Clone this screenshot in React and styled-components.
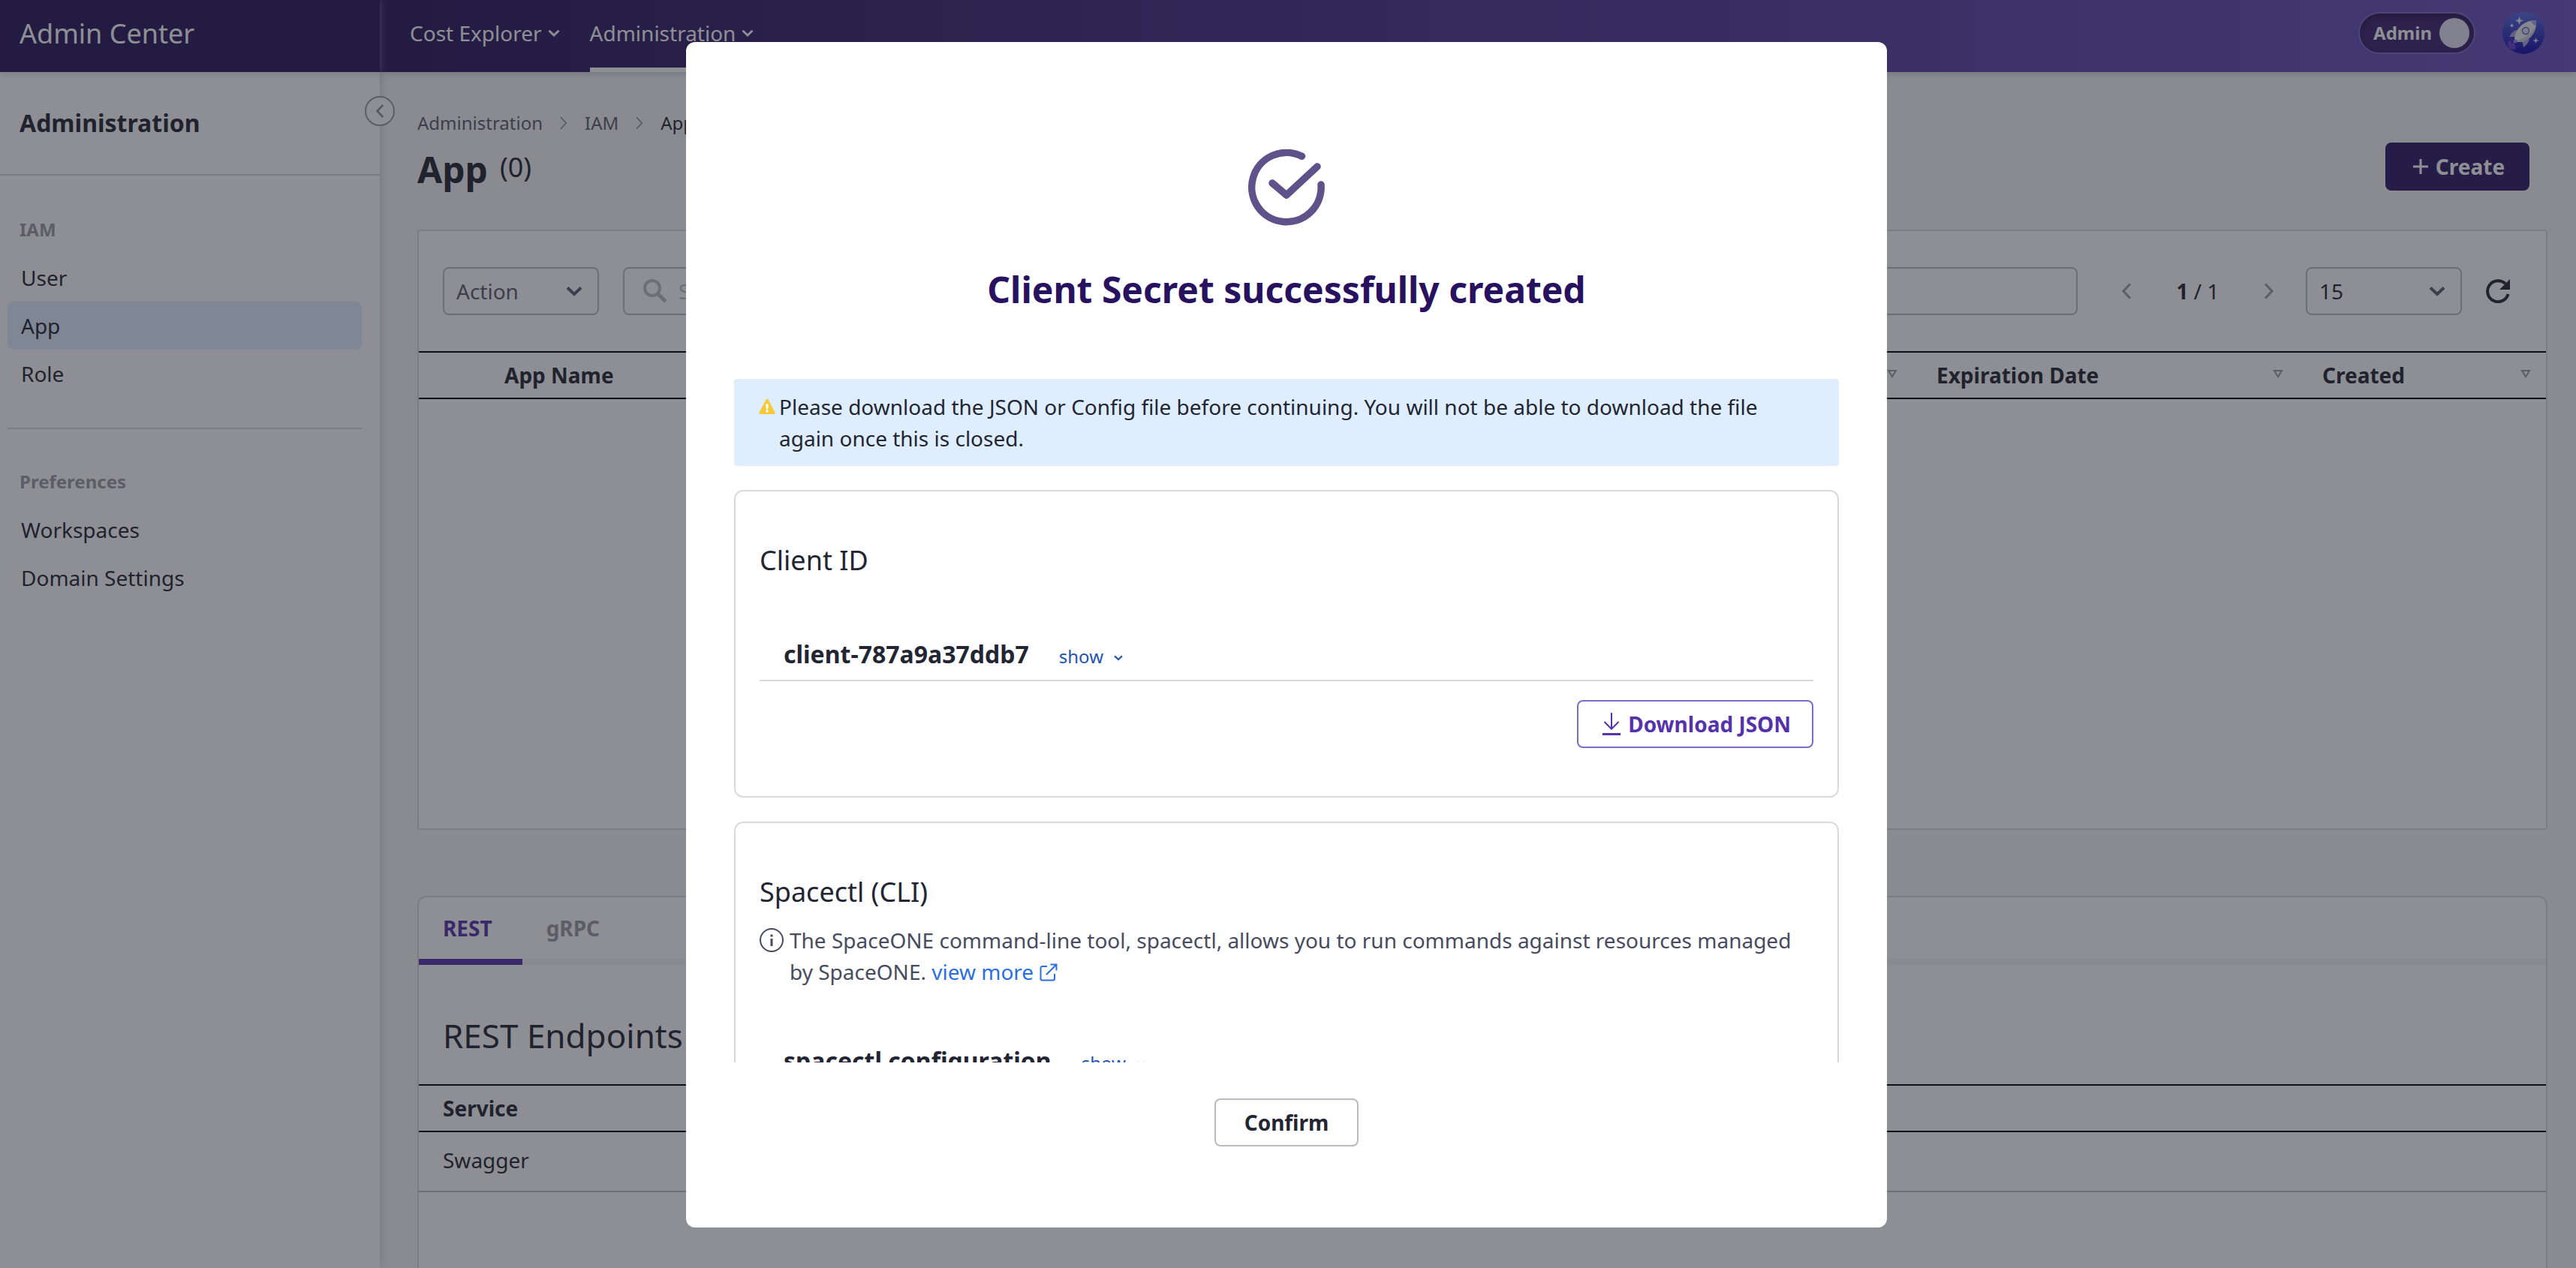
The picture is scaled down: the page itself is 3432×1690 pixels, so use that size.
import React from "react";
import styled, { createGlobalStyle } from "styled-components";

const ink = "#232533";
const violetDark = "#29175b";
const violet = "#5532aa";
const line = "#d9dadb";
const fieldLine = "#bebfc3";
const muted = "#9a9ba4";

const GlobalStyle = createGlobalStyle`
  * { box-sizing: border-box; }
  body { margin: 0; }
  body, button, input, select {
    font-family: "Noto Sans", sans-serif;
    font-size: 28px;
    line-height: 42px;
    color: ${ink};
  }
  h1, h2, h3, p, ul { margin: 0; padding: 0; font-weight: 400; }
  button { cursor: pointer; }
  svg { display: block; flex: none; }
`;

/* ---------- icons ---------- */

const Stroke = ({ w, h, box, sw = 2, children, ...rest }) => (
  <svg width={w} height={h} viewBox={box} fill="none" stroke="currentColor" strokeWidth={sw} aria-hidden="true" {...rest}>
    {children}
  </svg>
);

const ChevronDown = ({ w = 22, sw = 4 }) => (
  <Stroke w={w} h={(w * 14) / 22} box="0 0 22 14" sw={sw}>
    <path d="M2 2.5 11 11 20 2.5" />
  </Stroke>
);

const ChevronSide = ({ dir = "right", w = 14, h = 22, sw = 3 }) => (
  <Stroke w={w} h={h} box="0 0 14 22" sw={sw}>
    <path d={dir === "right" ? "M2 1.5 11 11 2 20.5" : "M12 1.5 3 11 12 20.5"} />
  </Stroke>
);

const SearchIcon = () => (
  <Stroke w={34} h={34} box="0 0 34 34" sw={4}>
    <circle cx="13" cy="13" r="10" />
    <path d="M20.500 20.500 31 31" strokeWidth="5" />
  </Stroke>
);

const RefreshIcon = () => (
  <Stroke w={32} h={32} box="0 0 32 32" sw={4}>
    <path d="M29.600 20A14 14 0 1 1 26 6.200" />
    <path d="M32 0V14H18Z" fill="currentColor" stroke="none" />
  </Stroke>
);

const PlusIcon = () => (
  <Stroke w={20} h={20} box="0 0 20 20" sw={3}>
    <path d="M10 0V20M0 10H20" />
  </Stroke>
);

const SortIcon = () => (
  <Stroke w={14} h={11} box="0 0 14 11" sw={2}>
    <path d="M2 1H12L7 9Z" />
  </Stroke>
);

const DownloadIcon = () => (
  <Stroke w={24} h={30} box="0 0 24 30" sw={2}>
    <path d="M12 0V21M2.500 12 12 21.500 21.500 12" />
    <path d="M0 28.500H24" strokeWidth="3" />
  </Stroke>
);

const InfoIcon = () => (
  <Stroke w={32} h={32} box="0 0 32 32" sw={2}>
    <circle cx="16" cy="16" r="15" />
    <path d="M16 14V24M16 8.500V11.500" strokeWidth="3" />
  </Stroke>
);

const ExternalIcon = () => (
  <Stroke w={24} h={24} box="0 0 24 24" sw={2}>
    <path d="M10 4H3.500A2 2 0 0 0 1.500 6V20.500A2 2 0 0 0 3.500 22.500H18A2 2 0 0 0 20 20.500V14" />
    <path d="M14.500 1.500H22.500V9.500M22 2 9 15" />
  </Stroke>
);

const WarningIcon = () => (
  <svg width="24" height="24" viewBox="0 0 24 24" aria-hidden="true">
    <path d="M10.600 2.600Q12 .8 13.400 2.600L22.500 19.500Q23 22 21 22H3Q1 22 1.500 19.500Z" fill="#f7c936" />
    <path d="M10.200 8.500H13.800L13.300 15.500H10.700Z" fill="#fff" />
    <circle cx="12" cy="18" r="1.700" fill="#fff" />
  </svg>
);

const CheckIcon = () => (
  <Stroke w={102} h={102} box="0 0 102 102" sw={9.5} strokeLinecap="round" strokeLinejoin="round">
    <path d="M71.500 9.200A46.200 46.200 0 1 0 97 47" />
    <path d="M32 45 51 61 92 23" />
  </Stroke>
);

const Rocket = () => (
  <svg width="56" height="56" viewBox="0 0 56 56" aria-hidden="true">
    <defs>
      <linearGradient id="sky" x1="0" y1="0" x2="0" y2="1">
        <stop offset="0" stopColor="#5a6ce0" />
        <stop offset="1" stopColor="#1408a8" />
      </linearGradient>
    </defs>
    <circle cx="28" cy="28" r="28" fill="url(#sky)" />
    <path d="M8 46Q5 38 11 38L12 42 15 40 17 44 18 49Q12 52 8 46Z" fill="#6a3bd0" />
    <path d="M22 24Q14 23 9 33L18 33Z M36 36Q35 42 28 47L26 38Z" fill="#a9a5e0" />
    <path d="M45 11Q46 24 38 33 29 41 20 40L16 36Q16 26 26 17 34 11 45 11Z" fill="#f0f0f4" />
    <path d="M45 11Q46 24 38 33 29 41 20 40L18 38Q32 36 44 20Z" fill="#cfcfda" />
    <path d="M38 11.500 45 11 45 19Q40 17 38 11.500Z" fill="#a9a5e0" />
    <circle cx="31" cy="25" r="4.500" fill="#dcdcf0" stroke="#5d63b8" strokeWidth="1.500" />
    <path d="M22.500 6 24 10 28 11.500 24 13 22.500 17 21 13 17 11.500 21 10Z M12.500 15 13.500 17 15.500 18 13.500 19 12.500 21 11.500 19 9.500 18 11.500 17Z M44.500 34 45.500 37 48.500 38 45.500 39 44.500 42 43.500 39 40.500 38 43.500 37Z" fill="#e6e6f4" />
    <circle cx="17" cy="39" r="2.500" fill="#8f88e0" />
  </svg>
);

/* ---------- shell ---------- */

const Page = styled.div`
  height: 100vh;
  display: flex;
  flex-direction: column;
  overflow: hidden;
  background: #f7f7f7;
`;

const Header = styled.header`
  display: flex;
  flex: none;
  height: 96px;
  color: #fff;
  background: linear-gradient(90deg, ${violetDark} 16%, #6e53c2 100%);
  box-shadow: 0 2px 10px rgba(0, 0, 0, 0.18);
  z-index: 2;
`;

const Brand = styled.div`
  width: 506px;
  flex: none;
  padding: 18px 26px;
  font-size: 36px;
  line-height: 54px;
  background: ${violetDark};
  box-shadow: 2px 0 8px rgba(255, 255, 255, 0.25);
`;

const TopNav = styled.nav`
  display: flex;
  flex: 1;
  gap: 40px;
  padding-left: 40px;
`;

const TopLink = styled.a`
  display: flex;
  align-items: center;
  gap: 8px;
  padding-bottom: 8px;
  color: inherit;
  text-decoration: none;
  border-radius: 6px 6px 0 0;
  background: ${(p) => (p.$active ? "linear-gradient(#fff, #fff) bottom / 100% 6px no-repeat" : "none")};
`;

const Account = styled.div`
  display: flex;
  align-items: center;
  gap: 36px;
  padding: 0 42px 8px 0;
`;

const ModeSwitch = styled.label`
  display: flex;
  align-items: center;
  gap: 10px;
  height: 56px;
  padding: 0 6px 0 18px;
  border: 2px solid #7a6bc0;
  border-radius: 28px;
  background: #3d2270;
  box-shadow: inset 0 4px 8px rgba(0, 0, 0, 0.3);
  font-size: 24px;
  font-weight: 700;
  cursor: pointer;
`;

const Knob = styled.input`
  appearance: none;
  width: 40px;
  height: 40px;
  margin: 0;
  border-radius: 50%;
  background: #e6e2f4;
`;

const Body = styled.div`
  display: flex;
  flex: 1;
  min-height: 0;
`;

/* ---------- sidebar ---------- */

const Sidebar = styled.aside`
  position: relative;
  width: 506px;
  flex: none;
  background: #fff;
  box-shadow: 2px 0 10px rgba(0, 0, 0, 0.14);
`;

const SideTitle = styled.h2`
  padding: 44px 26px 44px;
  font-size: 32px;
  line-height: 48px;
  font-weight: 700;
  border-bottom: 2px solid ${line};
`;

const Collapse = styled.button`
  position: absolute;
  top: 32px;
  right: -20px;
  display: grid;
  place-items: center;
  width: 40px;
  height: 40px;
  padding: 0;
  border: 2px solid #9a9ba0;
  border-radius: 50%;
  background: #fff;
  color: #8d8e96;
`;

const SideGroup = styled.section`
  margin: 0 24px 0 10px;
  padding: 54px 0 40px;
  & + & { border-top: 2px solid ${line}; padding-top: 52px; }
`;

const SideLabel = styled.h3`
  padding: 0 16px 14px;
  font-size: 24px;
  line-height: 36px;
  font-weight: 700;
  color: ${muted};
`;

const SideLink = styled.a`
  display: block;
  padding: 11px 18px;
  border-radius: 8px;
  color: ${ink};
  text-decoration: none;
  background: ${(p) => (p.$active ? "#e1efff" : "transparent")};
`;

/* ---------- main ---------- */

const Main = styled.main`
  display: flex;
  flex: 1;
  flex-direction: column;
  min-width: 0;
  padding: 50px 38px 0 50px;
`;

const Crumbs = styled.nav`
  display: flex;
  align-items: center;
  gap: 22px;
  font-size: 24px;
  line-height: 36px;
  color: #8d8e96;
  a { color: #5b5d6c; text-decoration: none; }
  span { color: ${ink}; }
`;

const TitleRow = styled.div`
  display: flex;
  align-items: flex-start;
  justify-content: space-between;
  padding: 8px 24px 44px 0;
`;

const Title = styled.h1`
  display: flex;
  align-items: center;
  gap: 16px;
  font-size: 48px;
  line-height: 72px;
  font-weight: 700;
  span { padding-bottom: 6px; font-size: 36px; line-height: 54px; font-weight: 400; }
`;

const Button = styled.button`
  display: flex;
  align-items: center;
  justify-content: center;
  gap: 10px;
  height: 64px;
  min-width: 192px;
  padding: ${(p) => (p.$withIcon ? "0 28px 0 32px" : "0 30px")};
  border: 2px solid ${(p) => (p.$primary ? "#2d1964" : p.$accent ? "#7b6bc8" : "#b9bac0")};
  border-radius: 8px;
  background: ${(p) => (p.$primary ? "#2d1964" : "#fff")};
  color: ${(p) => (p.$primary ? "#fff" : p.$accent ? violet : ink)};
  font-weight: 700;
`;

const ListPanel = styled.section`
  height: 800px;
  flex: none;
  border: 2px solid ${line};
  border-radius: 4px;
  background: #fff;
`;

const Toolbar = styled.div`
  display: flex;
  align-items: center;
  gap: 32px;
  padding: 48px 48px 48px 32px;
`;

const SelectBox = styled.label`
  display: flex;
  align-items: center;
  width: 208px;
  height: 64px;
  padding-right: 20px;
  border: 2px solid ${fieldLine};
  border-radius: 8px;
  color: #5b5d70;
  select {
    flex: 1;
    min-width: 0;
    height: 60px;
    padding: 0 0 0 16px;
    border: 0;
    appearance: none;
    background: transparent;
    color: ${(p) => (p.$strong ? ink : "#5b5d70")};
  }
`;

const SearchBox = styled.label`
  display: flex;
  flex: 1;
  align-items: center;
  gap: 14px;
  height: 64px;
  padding: 0 24px;
  border: 2px solid ${fieldLine};
  border-radius: 8px;
  color: ${fieldLine};
  input { flex: 1; min-width: 0; padding: 0; border: 0; outline: 0; background: transparent; }
  input::placeholder { color: ${fieldLine}; opacity: 1; }
`;

const Pager = styled.div`
  display: flex;
  align-items: center;
  justify-content: space-between;
  width: 240px;
  padding: 0 10px 0 26px;
  line-height: 42px;
`;

const IconButton = styled.button`
  display: grid;
  place-items: center;
  padding: 0;
  border: 0;
  background: none;
  color: ${(p) => (p.$soft ? muted : ink)};
`;

const Table = styled.table`
  width: 100%;
  table-layout: fixed;
  border-collapse: separate;
  border-spacing: 0;
  text-align: left;
  th {
    height: 64px;
    padding: 0 20px 0 32px;
    border: solid #000;
    border-width: 2px 0;
    font-weight: 700;
  }
  td { padding: 16px 32px 20px; border-bottom: 2px solid ${fieldLine}; }
`;

const NameCol = styled.th`
  && { padding-left: 114px; }
`;

const SizedCol = styled.th`
  width: ${(p) => p.$w}px;
`;

const HeadCell = styled.div`
  display: flex;
  align-items: center;
  justify-content: space-between;
  svg { color: ${muted}; margin-bottom: 4px; }
`;

const TabPanel = styled.section`
  flex: 1 0 auto;
  margin-top: 88px;
  border: 2px solid ${line};
  border-bottom: 0;
  border-radius: 12px 12px 0 0;
  background: #fff;
`;

const Tabs = styled.div`
  display: flex;
  background: linear-gradient(#f5f5f6, #f5f5f6) bottom / 100% 8px no-repeat;
`;

const Tab = styled.button`
  padding: 20px 40px 20px 32px;
  border: 0;
  border-bottom: 8px solid ${(p) => (p.$active ? violet : "transparent")};
  background: none;
  color: ${(p) => (p.$active ? violet : muted)};
  font-weight: 700;
`;

const PanelTitle = styled.h2`
  padding: 61px 32px 32px;
  font-size: 44px;
  line-height: 66px;
`;

/* ---------- modal ---------- */

const Backdrop = styled.div`
  position: fixed;
  inset: 0;
  z-index: 10;
  display: flex;
  justify-content: center;
  padding: 56px 4px 54px 0;
  background: rgba(29, 31, 41, 0.5);
`;

const Modal = styled.div`
  display: flex;
  flex-direction: column;
  width: 1600px;
  max-width: 100%;
  border-radius: 12px;
  background: #fff;
`;

const ModalHead = styled.div`
  display: flex;
  flex-direction: column;
  align-items: center;
  gap: 49px;
  padding: 143px 64px 83px;
  color: #5f5189;
`;

const ModalTitle = styled.h2`
  font-size: 48px;
  line-height: 72px;
  font-weight: 700;
  color: #28125f;
`;

const ModalBody = styled.div`
  display: flex;
  flex: 1;
  flex-direction: column;
  gap: 32px;
  min-height: 0;
  padding: 0 64px;
  overflow-y: auto;
  scrollbar-width: none;
`;

const Banner = styled.div`
  display: flex;
  flex: none;
  gap: 4px;
  padding: 16px 32px;
  border-radius: 4px;
  background: #deeeff;
  svg { margin-top: 9px; }
`;

const Card = styled.section`
  flex: none;
  padding: 65px 32px 64px;
  border: 2px solid ${line};
  border-radius: 12px;
`;

const CardTitle = styled.h3`
  font-size: 36px;
  line-height: 54px;
`;

const Secret = styled.div`
  display: flex;
  align-items: baseline;
  gap: 40px;
  padding: 74px 32px 10px;
  margin-bottom: 25px;
  border-bottom: 2px solid ${line};
  strong { font-size: 32px; line-height: 48px; }
`;

const ShowButton = styled.button`
  display: flex;
  align-items: center;
  gap: 14px;
  padding: 0;
  border: 0;
  background: none;
  color: #2353b0;
  font-size: 24px;
  line-height: 36px;
  svg { margin-top: 4px; }
`;

const CardActions = styled.div`
  display: flex;
  justify-content: flex-end;
`;

const Hint = styled.div`
  display: flex;
  gap: 8px;
  padding-top: 16px;
  color: #484b5e;
  & > svg { margin-top: 5px; }
`;

const MoreLink = styled.a`
  color: #2a6fe0;
  text-decoration: none;
  svg { display: inline-block; margin-left: 8px; vertical-align: -2px; }
`;

const ModalFoot = styled.div`
  display: flex;
  flex: none;
  justify-content: center;
  padding: 48px 64px 108px;
`;

const groups = [
  { label: "IAM", items: ["User", "App", "Role"] },
  { label: "Preferences", items: ["Workspaces", "Domain Settings"] },
];

export default function App() {
  return (
    <>
      <GlobalStyle />
      <Page>
        <Header>
          <Brand>Admin Center</Brand>
          <TopNav>
            <TopLink href="#cost">Cost Explorer <ChevronDown w={16} /></TopLink>
            <TopLink href="#admin" $active>Administration <ChevronDown w={16} /></TopLink>
          </TopNav>
          <Account>
            <ModeSwitch>
              Admin
              <Knob type="checkbox" defaultChecked />
            </ModeSwitch>
            <Rocket />
          </Account>
        </Header>
        <Body>
          <Sidebar>
            <SideTitle>Administration</SideTitle>
            <Collapse aria-label="Collapse menu"><ChevronSide dir="left" w={12} h={20} /></Collapse>
            {groups.map((g) => (
              <SideGroup key={g.label}>
                <SideLabel>{g.label}</SideLabel>
                {g.items.map((item) => (
                  <SideLink key={item} href="#item" $active={item === "App"}>{item}</SideLink>
                ))}
              </SideGroup>
            ))}
          </Sidebar>
          <Main>
            <Crumbs>
              <a href="#admin">Administration</a>
              <ChevronSide w={12} h={18} sw={2} />
              <a href="#iam">IAM</a>
              <ChevronSide w={12} h={18} sw={2} />
              <span>App</span>
            </Crumbs>
            <TitleRow>
              <Title>App <span>(0)</span></Title>
              <Button $primary $withIcon><PlusIcon />Create</Button>
            </TitleRow>
            <ListPanel>
              <Toolbar>
                <SelectBox>
                  <select aria-label="Action"><option>Action</option></select>
                  <ChevronDown />
                </SelectBox>
                <SearchBox>
                  <SearchIcon />
                  <input placeholder="Search" aria-label="Search" />
                </SearchBox>
                <Pager>
                  <IconButton $soft aria-label="Previous page"><ChevronSide dir="left" /></IconButton>
                  <span><b>1</b> / 1</span>
                  <IconButton $soft aria-label="Next page"><ChevronSide /></IconButton>
                </Pager>
                <SelectBox $strong>
                  <select aria-label="Rows per page"><option>15</option></select>
                  <ChevronDown />
                </SelectBox>
                <IconButton aria-label="Refresh"><RefreshIcon /></IconButton>
              </Toolbar>
              <Table>
                <thead>
                  <tr>
                    <NameCol><HeadCell>App Name<SortIcon /></HeadCell></NameCol>
                    <SizedCol $w={514}><HeadCell>Expiration Date<SortIcon /></HeadCell></SizedCol>
                    <SizedCol $w={330}><HeadCell>Created<SortIcon /></HeadCell></SizedCol>
                  </tr>
                </thead>
              </Table>
            </ListPanel>
            <TabPanel>
              <Tabs>
                <Tab $active>REST</Tab>
                <Tab>gRPC</Tab>
              </Tabs>
              <PanelTitle>REST Endpoints</PanelTitle>
              <Table>
                <thead><tr><th>Service</th></tr></thead>
                <tbody><tr><td>Swagger</td></tr></tbody>
              </Table>
            </TabPanel>
          </Main>
        </Body>
      </Page>
      <Backdrop>
        <Modal role="dialog" aria-modal="true" aria-labelledby="modal-title">
          <ModalHead>
            <CheckIcon />
            <ModalTitle id="modal-title">Client Secret successfully created</ModalTitle>
          </ModalHead>
          <ModalBody>
            <Banner>
              <WarningIcon />
              <p>
                Please download the JSON or Config file before continuing. You will not be able to download the file
                again once this is closed.
              </p>
            </Banner>
            <Card>
              <CardTitle>Client ID</CardTitle>
              <Secret>
                <strong>client-787a9a37ddb7</strong>
                <ShowButton>show <ChevronDown w={12} /></ShowButton>
              </Secret>
              <CardActions>
                <Button $accent $withIcon><DownloadIcon />Download JSON</Button>
              </CardActions>
            </Card>
            <Card>
              <CardTitle>Spacectl (CLI)</CardTitle>
              <Hint>
                <InfoIcon />
                <p>
                  The SpaceONE command-line tool, spacectl, allows you to run commands against resources managed by
                  SpaceONE. <MoreLink href="#more">view more<ExternalIcon /></MoreLink>
                </p>
              </Hint>
              <Secret>
                <strong>spacectl configuration</strong>
                <ShowButton>show <ChevronDown w={12} /></ShowButton>
              </Secret>
            </Card>
          </ModalBody>
          <ModalFoot>
            <Button>Confirm</Button>
          </ModalFoot>
        </Modal>
      </Backdrop>
    </>
  );
}
